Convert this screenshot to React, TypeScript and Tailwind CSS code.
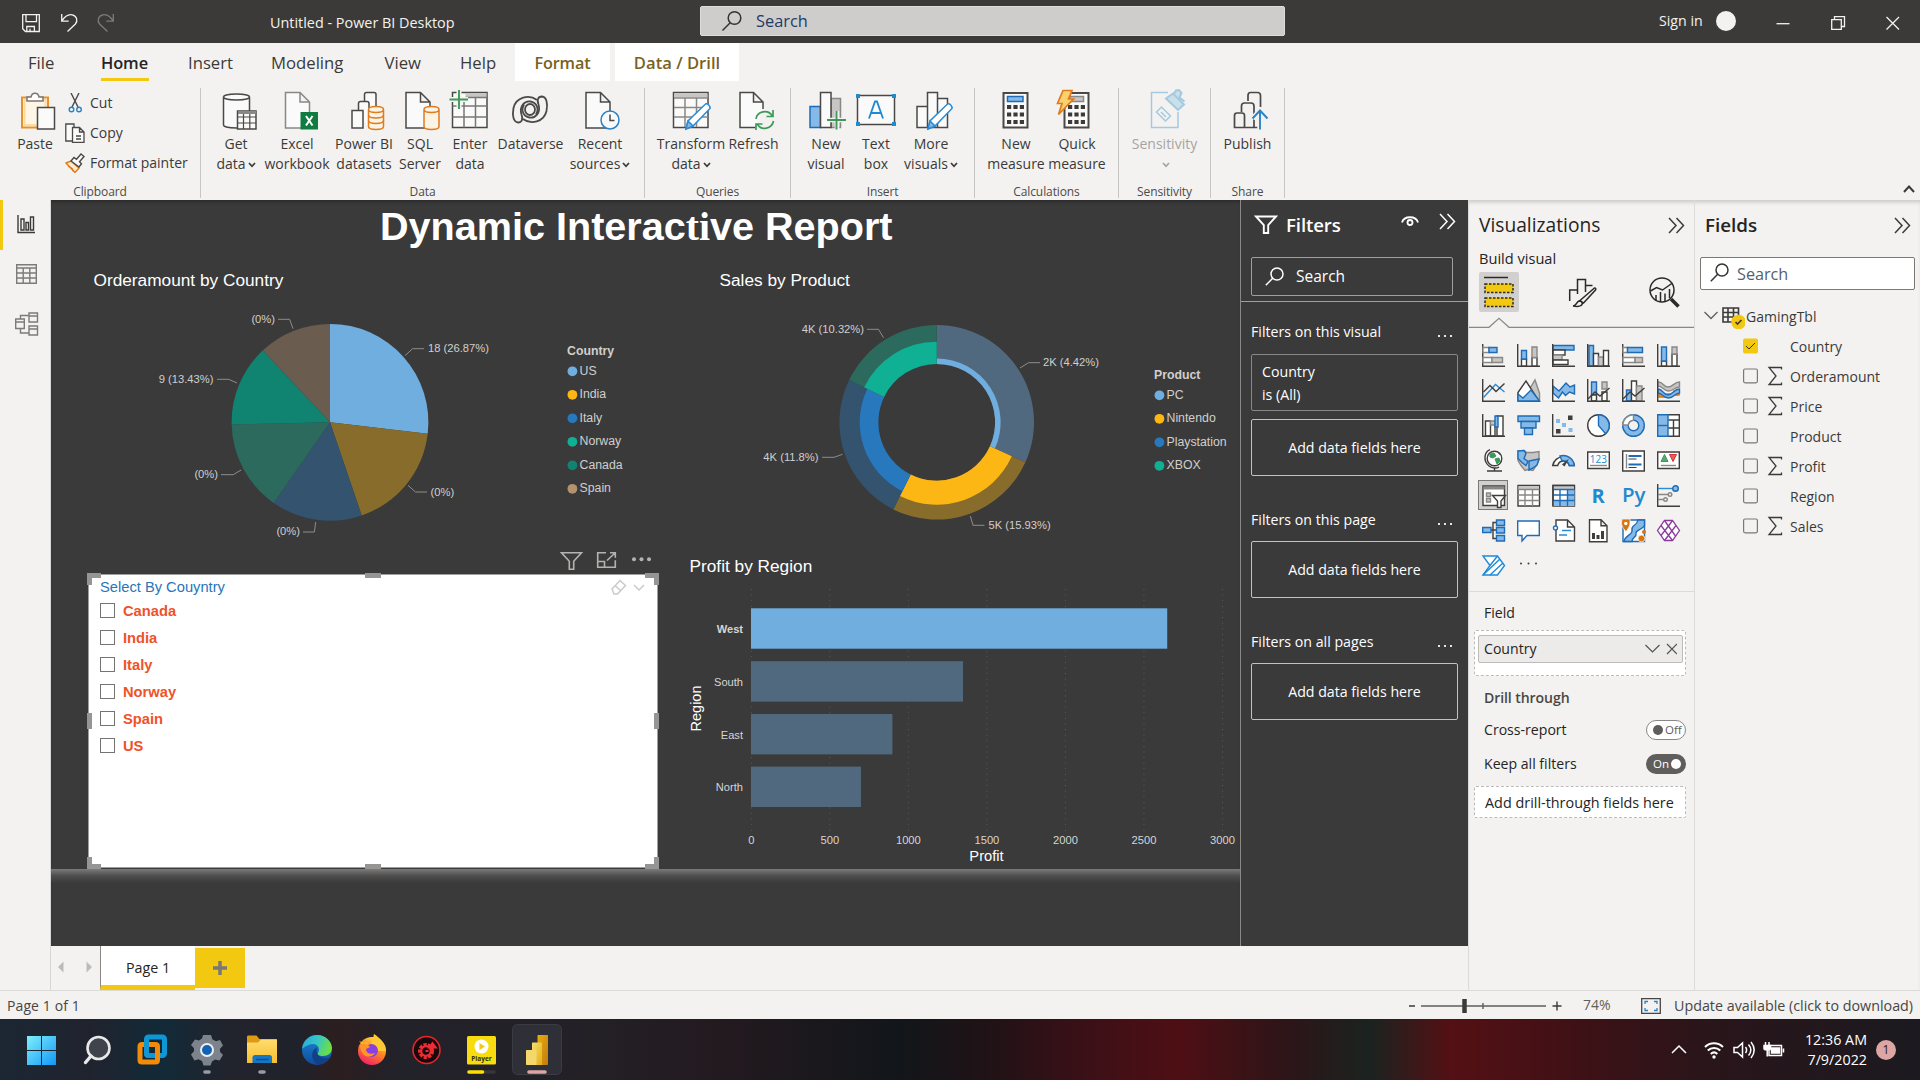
import React from "react";

type Kids = { children?: React.ReactNode };

/* ---------- geometry helpers ---------- */
const pt = (cx: number, cy: number, r: number, deg: number) => {
  const a = ((deg - 90) * Math.PI) / 180;
  return `${(cx + r * Math.cos(a)).toFixed(2)},${(cy + r * Math.sin(a)).toFixed(2)}`;
};
const ring = (cx: number, cy: number, r0: number, r1: number, a: number, b: number) => {
  const big = b - a > 180 ? 1 : 0;
  return `M${pt(cx, cy, r1, a)}A${r1},${r1} 0 ${big} 1 ${pt(cx, cy, r1, b)}L${pt(cx, cy, r0, b)}${
    r0 > 0 ? `A${r0},${r0} 0 ${big} 0 ${pt(cx, cy, r0, a)}` : ""
  }Z`;
};

/* ---------- title bar ---------- */
function TitleBar() {
  return (
    <header className="flex h-[43px] shrink-0 items-center bg-[#3b3a38] text-[#f3f2f0]">
      <svg className="h-[43px] w-[270px] shrink-0" viewBox="0 0 270 43" fill="none" stroke="#f3f2f0" strokeWidth="1.3">
        <path d="M22.7 14.7h16.6v16.8H25.4l-2.7-2.7zM26 14.7v7h10.5v-7M26.8 31.5v-5h7.6v5M30 28.8v2.6" />
        <path d="M61.7 14v7.2h7M61.9 21c3-5 7-6.8 10.3-6.2 4.8 1 5.8 6.2 3.2 9.2L67.5 31.5" />
        <path d="M113.3 14v7.2h-7M113.1 21c-3-5-7-6.8-10.3-6.2-4.8 1-5.8 6.2-3.2 9.2l7.9 7.500" stroke="#7d7c7a" />
      </svg>
      <span className="w-[430px] pt-[2px] text-[14.4px]">Untitled - Power BI Desktop</span>
      <div className="flex h-[30px] w-[585px] -translate-y-px items-center rounded-[2px] border border-[#dddcda] bg-[#cecdcb] text-[16.4px] text-[#1f3b68]">
        <svg className="ml-[20px] mr-[13px] h-[22px] w-[22px]" viewBox="0 0 22 22" fill="none" stroke="#33332f" strokeWidth="1.5">
          <circle cx="13.500" cy="8" r="6.300" />
          <path d="M9.2 12.7L1.5 20.5" />
        </svg>
        <span className="pt-[2px]">Search</span>
      </div>
      <span className="ml-[374px] w-[57px] -translate-y-px whitespace-nowrap text-[14.2px]">Sign in</span>
      <span className="h-[20px] w-[20px] -translate-y-px rounded-full bg-[#f3f2f0]" />
      <svg className="ml-[34px] h-[43px] w-[140px]" viewBox="1770 0 140 43" fill="none" stroke="#f3f2f0" strokeWidth="1.3">
        <path d="M1776.500 23.700h13" />
        <path d="M1831.700 19.700h9.600v9.600h-9.600zM1834.500 19.500v-2.800h10v9.800h-3" />
        <path d="M1886.500 17l12.500 12.500M1899 17l-12.500 12.500" />
      </svg>
    </header>
  );
}

/* ---------- ribbon tabs ---------- */
function Tabs() {
  return (
    <nav className="flex h-[38px] shrink-0 items-start text-[16.7px] leading-[40px] text-[#3b3a38]">
      <span className="ml-[28px] w-[73px]">File</span>
      <span className="relative mr-[39px] h-[38px] w-[48px] whitespace-nowrap text-[16.4px] font-semibold tracking-[-0.1px] text-[#252423]">
        Home
        <i className="absolute bottom-0 left-0 h-[3px] w-[48px] bg-[#f2c811]" />
      </span>
      <span className="w-[83px]">Insert</span>
      <span className="w-[113.5px]">Modeling</span>
      <span className="w-[75.5px]">View</span>
      <span className="w-[55px]">Help</span>
      <span className="mr-[5px] h-[38px] w-[95px] bg-white text-center text-[16.2px] font-semibold tracking-[-0.1px] text-[#7a611d]">Format</span>
      <span className="h-[38px] w-[124px] bg-white text-center text-[16.6px] font-semibold text-[#7a611d]">Data / Drill</span>
    </nav>
  );
}

/* ---------- ribbon ---------- */
function Group({ label, w, pad, children }: Kids & { label: string; w: string; pad?: string }) {
  return (
    <section className={`flex h-[110px] flex-col border-r border-[#c8c6c4] ${w}`}>
      <div className={`flex h-[95px] shrink-0 ${pad ?? "justify-center"}`}>{children}</div>
      <div className="shrink-0 text-center text-[12px] leading-[18px] tracking-[-0.1px] text-[#4c4a48]">{label}</div>
    </section>
  );
}

function Item({ w, c, a, b, caret, dim, children }: Kids & { w: string; c: number; a: string; b?: string; caret?: boolean; dim?: boolean }) {
  return (
    <div className={`flex shrink-0 flex-col items-center text-[14px] leading-[20px] whitespace-nowrap ${w} ${dim ? "text-[#a6a4a2]" : "text-[#3b3a38]"}`}>
      <svg className="mt-px mb-[5px] h-[40px] w-[44px] overflow-visible" viewBox={`${c - 22} 89 44 40`} fill="none" stroke="#4a4947" strokeWidth="1.500">
        {children}
      </svg>
      <span>{a}</span>
      <span className="flex h-[20px] items-center">
        {b}
        {caret && (
          <svg className="ml-[2px] mt-[2px] h-[6px] w-[8px]" viewBox="0 0 8 6" fill="none" stroke="currentColor" strokeWidth="1.700">
            <path d="M1 1l3 3.300L7 1" />
          </svg>
        )}
      </span>
    </div>
  );
}

const page = (x: number) => `M${x} 92.500h14.500l9.500 9.500v26h-24zM${x + 14.5} 92.500v9.500h9.500`;
const cyl = (x: number, y: number, w: number, h: number) =>
  `M${x} ${y}v${h}c0 4 ${w} 4 ${w} 0v-${h}c0-4-${w}-4-${w} 0c0 4 ${w} 4 ${w} 0`;

function Ribbon() {
  return (
    <div className="flex h-[119px] shrink-0 pt-[7px]">
      <Group label="Clipboard" w="w-[201px]" pad="justify-start">
        <Item w="ml-[5px] w-[60px]" c={35} a="Paste">
          <path d="M22 97.500h26v30H22z" fill="#fdf6e6" stroke="#e8912d" strokeWidth="2" />
          <path d="M24.500 100h21v25h-21z" stroke="#fbdc9b" strokeWidth="2" />
          <path d="M27 101v-4h4c1-5 7-5 8 0h4v4z" fill="#fff" stroke="#7a7876" />
          <path d="M37.500 107.500h17v21.500h-17z" fill="#fafafa" />
        </Item>
        <div className="flex flex-col text-[14px] leading-[30px] text-[#3b3a38]">
          <div className="flex items-center">
            <svg className="mr-[5px] h-[20px] w-[20px]" viewBox="0 0 20 20" fill="none" stroke="#4a4947" strokeWidth="1.400">
              <path d="M6 0l7 14M14 0L7 14" />
              <circle cx="6.500" cy="16.500" r="2.300" stroke="#2a83c4" />
              <circle cx="14" cy="16.500" r="2.300" stroke="#2a83c4" />
            </svg>
            Cut
          </div>
          <div className="flex items-center">
            <svg className="mr-[5px] h-[20px] w-[20px]" viewBox="0 0 20 20" fill="#fafafa" stroke="#4a4947" strokeWidth="1.300">
              <path d="M7 18H.8V1H9v3" />
              <path d="M7.500 4.500h7l4.500 4.500v10.300H7.500zM14.500 4.500V9H19M11 13h5M11 16h5" />
            </svg>
            Copy
          </div>
          <div className="flex items-center whitespace-nowrap">
            <svg className="mr-[5px] h-[20px] w-[20px]" viewBox="0 0 20 20" fill="none" stroke="#4a4947" strokeWidth="1.400">
              <path d="M1 10l5-2 8 7-4 4.500z" fill="#fde9cc" stroke="#e07b1c" />
              <path d="M3 13l4 2.500 1.500 3" stroke="#e07b1c" />
              <path d="M6 8l3-3.500 2.500 1.800L16 1l3 2.500-4.500 5.300 2 2L14 14z" fill="#fafafa" />
            </svg>
            Format painter
          </div>
        </div>
      </Group>

      <Group label="Data" w="w-[444px]" pad="justify-start pl-[5px]">
        <Item w="w-[60px]" c={235.5} a="Get" b="data" caret>
          <path d={cyl(223, 97, 26, 28)} fill="#fafafa" />
          <path d="M237 111h18.500v18H237z" fill="#fafafa" />
          <path d="M237.500 112.500h18" stroke="#8a8886" strokeWidth="3" />
          <path d="M237 117h18.500M237 123h18.500M243 114v15M249.300 114v15" strokeWidth="1.200" />
        </Item>
        <Item w="w-[62px]" c={296} a="Excel" b="workbook">
          <path d={page(284.5)} fill="#fafafa" stroke="#8a8886" />
          <path d="M299.500 112h17.500v17.500h-17.500z" fill="#107c41" stroke="none" />
          <path d="M305 116l6.500 9.500M311.500 116l-6.500 9.500" stroke="#fff" strokeWidth="2" />
        </Item>
        <Item w="w-[72px]" c={363} a="Power BI" b="datasets">
          <path d="M363.500 101v-6.500c0-1.500.5-2 2-2h7.500c1.500 0 2 .5 2 2V112" fill="#fafafa" />
          <path d="M357.500 112v-8.500c0-1.500.5-2 2-2h6.500c1.500 0 2 .5 2 2V128" fill="#fafafa" />
          <path d="M351 110.500h11V128h-11z" fill="#fafafa" />
          <path d={cyl(367.5, 109.5, 15, 17)} fill="#fdf3e5" stroke="#e07b1c" />
          <path d="M367.500 115c0 4 15 4 15 0M367.500 120.500c0 4 15 4 15 0" stroke="#e07b1c" />
        </Item>
        <Item w="w-[40px]" c={419.5} a="SQL" b="Server">
          <path d={page(405.5)} fill="#fafafa" />
          <path d={cyl(423.5, 109.5, 15, 17)} fill="#fdf3e5" stroke="#e07b1c" />
        </Item>
        <Item w="w-[60px]" c={469.5} a="Enter" b="data">
          <path d="M452 92.500h34.500v35H452z" fill="#fafafa" />
          <path d="M465 95h21" stroke="#c8c6c4" strokeWidth="4" />
          <path d="M452 106h34.500M452 117h34.500M463.500 97v30.500M475 97v30.500M465 97.500h21.500" stroke="#7a7876" />
          <path d="M449 99.500h18.500M458.500 90v19" stroke="#f3f2f0" strokeWidth="5" />
          <path d="M449 99.500h18.500M458.500 90v19" stroke="#3b9a58" strokeWidth="1.900" />
        </Item>
        <Item w="w-[61px]" c={530} a="Dataverse">
          <g strokeWidth="1.800">
            <path d="M536 100c-8-6-21-3-23.500 8-1.500 8 0 14 4.500 14.500 4.500 0 5-4 3.500-8-2.500-8 3-14 9-13 6 1 9 7 5.500 13" />
            <path d="M522 119c8 6 21 3 23.500-8 1.500-8 0-14-4.500-14.500-4.500 0-5 4-3.500 8 2.500 8-3 14-9 13-6-1-9-7-5.500-13" />
            <ellipse cx="529" cy="109.500" rx="5" ry="5.500" />
          </g>
        </Item>
        <Item w="w-[78px]" c={599.5} a="Recent" b="sources" caret>
          <path d={page(585.5)} fill="#fafafa" />
          <circle cx="609.500" cy="120" r="9" fill="#fafafa" stroke="#2a83c4" />
          <path d="M609.500 114.500v6h4.500" />
        </Item>
      </Group>

      <Group label="Queries" w="w-[146px]" pad="justify-start pl-[8px]">
        <Item w="w-[76px]" c={691} a="Transform" b="data" caret>
          <path d="M673.500 92.500h34.500v35h-34.500z" fill="#fafafa" />
          <path d="M674 95.500h33.500" stroke="#c8c6c4" strokeWidth="4" />
          <path d="M674 98h34M674 107.500h34M674 117h34M685 98v29M696.500 98v29" stroke="#8a8886" />
          <path d="M686 129l2-8 17.500-17c2-1 5 2 4.500 4.500L693 126z" fill="#fff" stroke="#2a8ad4" />
          <path d="M686 129l2-8 5 5z" fill="#84b9e8" stroke="#2a8ad4" />
        </Item>
        <Item w="w-[49px]" c={753.5} a="Refresh">
          <path d="M755 127.500h-15.500v-35h13.500l9.500 9.500v7M753 92.500v9.500h9.500" fill="#fafafa" />
          <path d="M755.500 119c1-8 12-10 16-3.500M772.500 110v6.500h-6.500M773 121c-1.500 8-12 10-16 3.500M755.500 130v-6h6.500" stroke="#3b9a58" strokeWidth="1.700" />
        </Item>
      </Group>

      <Group label="Insert" w="w-[184px]" pad="justify-start pl-[10px]">
        <Item w="w-[50px]" c={826} a="New" b="visual">
          <path d="M810 106.500h10.500v21H810z" fill="#84b9e8" stroke="#1e6cb5" />
          <path d="M831 98.500h9.500v29H831z" fill="#c8c6c4" stroke="#8a8886" />
          <path d="M820.500 92.500H831v35h-10.500z" fill="#fafafa" />
          <path d="M828 120h18M837 111v18" stroke="#f3f2f0" strokeWidth="4.500" />
          <path d="M827 120h19M836.500 111v18.500" stroke="#3b9a58" strokeWidth="1.900" />
        </Item>
        <Item w="w-[50px]" c={876} a="Text" b="box">
          <path d="M857.500 95.500h37v29h-37z" fill="#fafafa" />
          <path d="M856 94h4v4h-4zM892 94h4v4h-4zM856 122h4v4h-4zM892 122h4v4h-4z" fill="#1e8ad0" stroke="none" />
          <path d="M869 118.500l6-17h2l6 17M871 113h10" stroke="#1e8ad0" strokeWidth="1.800" />
        </Item>
        <Item w="w-[60px]" c={931} a="More" b="visuals" caret>
          <path d="M917 106.500h10.500v21H917zM937.500 98.500h10v29h-10zM927.500 92.500h10v35h-10z" fill="#fafafa" />
          <path d="M928 129l2-8 17.500-17c2-1 5 2 4.500 4.500L935 126z" fill="#fff" stroke="#2a8ad4" />
          <path d="M928 129l2-8 5 5z" fill="#84b9e8" stroke="#2a8ad4" />
        </Item>
      </Group>

      <Group label="Calculations" w="w-[144px]" pad="justify-start pl-[10px]">
        <Item w="w-[62px]" c={1016} a="New" b="measure">
          <path d="M1003.500 93h24v34.500h-24z" fill="#fafafa" strokeWidth="2" />
          <path d="M1007.500 96.500h15.500v5h-15.500z" fill="#84b9e8" stroke="#1e6cb5" />
          <path d="M1007 107h17M1007 114.500h17M1007 122h17" stroke="#3b3a38" strokeWidth="3.800" strokeDasharray="4.200 2.200" />
        </Item>
        <Item w="w-[60px]" c={1077} a="Quick" b="measure">
          <path d="M1064.500 93h24v34.500h-24z" fill="#fafafa" strokeWidth="2" />
          <path d="M1070 96.500h13.500v5H1070z" fill="#c8c6c4" stroke="#8a8886" />
          <path d="M1068 107h17M1068 114.500h17M1068 122h17" stroke="#3b3a38" strokeWidth="3.800" strokeDasharray="4.200 2.200" />
          <path d="M1063 90.500h9l-3.500 8.500h5l-15 15.500 3.500-11h-4.500z" fill="#fbd06e" stroke="#e07b1c" strokeWidth="1.700" />
        </Item>
      </Group>

      <Group label="Sensitivity" w="w-[92px]">
        <Item w="w-[91px]" c={1164} a="Sensitivity" b="" caret dim>
          <g stroke="#a3cae0">
            <path d="M1177 112v15.500h-26.500v-35H1167" />
            <path d="M1155.500 112l5-5 9 9-5 5zM1160 112l5 5" />
            <path d="M1165 98.500l7-5 11 11-6 5.500zM1172 95l3-4.500 3-.5 2.500 3-2 4.500 5 4" fill="#c9dfea" strokeWidth="2" />
          </g>
        </Item>
      </Group>

      <Group label="Share" w="w-[74px]">
        <Item w="w-[74px]" c={1247} a="Publish">
          <g strokeWidth="1.700">
            <path d="M1247 101v-5.500c0-2 .5-3 2.500-3h7c2 0 3 1 3 3V107" />
            <path d="M1240.500 112v-6c0-2 1-3 3-3h6.500c2 0 3 1 3 3v21.500" />
            <path d="M1233.500 127.500v-12c0-2 .5-2.500 2.500-2.500h5c2 0 2.500.5 2.500 2.500v12zM1243.500 127.500h13" />
          </g>
          <path d="M1259 129v-18M1251.500 118.500l7.500-8 7.500 8" stroke="#f3f2f0" strokeWidth="5" />
          <path d="M1259 129.500v-18.500M1251.500 118.500l7.500-8 7.500 8" stroke="#2a83c4" strokeWidth="1.900" />
        </Item>
      </Group>
      <svg className="mt-[94px] ml-auto mr-[4px] h-[12px] w-[14px]" viewBox="0 0 14 12" fill="none" stroke="#3b3a38" strokeWidth="2">
        <path d="M2 10l5-5.500 5 5.500" />
      </svg>
    </div>
  );
}

/* ---------- left rail ---------- */
function Rail() {
  return (
    <aside className="flex w-[51px] shrink-0 flex-col border-r border-[#d8d6d4]">
      <div className="flex h-[50px] items-center border-l-[3px] border-[#f2c811] pl-[13px]">
        <svg className="h-[20px] w-[20px]" viewBox="0 0 20 20" fill="none" stroke="#3b3a38" strokeWidth="1.400">
          <path d="M2 0v17.500h17M5 4h3v11H5zM10 7.500h2.500V15H10zM14.500 2h3v13h-3z" />
        </svg>
      </div>
      <div className="flex h-[47px] items-center pl-[16px]">
        <svg className="h-[20px] w-[21px]" viewBox="0 0 21 20" fill="none" stroke="#7d7b79" strokeWidth="1.400">
          <path d="M.7.700h19.600v18.600H.7zM.7 4h19.600M.7 9h19.600M.7 14h19.600M7.200 4v15M13.800 4v15" />
        </svg>
      </div>
      <div className="flex h-[54px] items-center pl-[15px]">
        <svg className="h-[24px] w-[24px]" viewBox="0 0 24 24" fill="none" stroke="#7d7b79" strokeWidth="1.400">
          <path d="M.7 7h8.600v9.500H.7zM.7 10h8.600M14 1h8.500v9H14zM14 4h8.500M14 14h8.500v9H14zM14 17h8.500M5.500 7V3.500H14M5.500 16.500v4.500H14" />
        </svg>
      </div>
    </aside>
  );
}

/* ---------- report visuals ---------- */
const C = { us: "#70aee0", india: "#fdb714", italy: "#2878bd", norway: "#0fb094", canada: "#118371", spain: "#b3926e" };

const pieData: [number, string][] = [
  [18, C.us],
  [12, "#886c2b"],
  [10, "#33536f"],
  [10, "#2b6a5d"],
  [9, "#118371"],
  [8, "#6a5c4e"],
];

function Legend({ x, y, title, rows }: { x: number; y: number; title: string; rows: [string, string][] }) {
  return (
    <g fill="#d0cfcd" fontSize="12.300">
      <text x={x} y={y + 4.5} fontWeight="700">{title}</text>
      {rows.map(([n, c], i) => (
        <g key={n}>
          <circle cx={x + 5.4} cy={y + 20.7 + i * 23.5} r="4.900" fill={c} />
          <text x={x + 12.5} y={y + 24.3 + i * 23.4}>{n}</text>
        </g>
      ))}
    </g>
  );
}

const leader = { fill: "none", stroke: "#8f8d8b", strokeWidth: 1 } as const;

function PieChart() {
  let acc = 0;
  return (
    <svg className="h-[300px] w-[623px]" viewBox="51 260 623 300" fontFamily="Liberation Sans, Arial, sans-serif">
      <text x="93.500" y="285.500" fontSize="17.250" fill="#fff">Orderamount by Country</text>
      {pieData.map(([v, c], i) => {
        const a = (acc / 67) * 360;
        acc += v;
        return <path key={i} d={ring(330, 422.3, 0, 98.4, a, (acc / 67) * 360)} fill={c} />;
      })}
      <g {...leader}>
        <path d="M405 355.700l7.500-7h11.500M278 319.300h11.600l3.400 9.400M217 379.300h11.600l8.400 3.700M221 474.700h12.200l8-4.700M303 532h11.400l1.300-10M408 485.300l7.400 6.700H427" />
      </g>
      <g fontSize="11.200" fill="#d0cfcd">
        <text x="428" y="352.300">18 (26.87%)</text>
        <text x="275" y="323.300" textAnchor="end">(0%)</text>
        <text x="213.500" y="383.300" textAnchor="end">9 (13.43%)</text>
        <text x="218" y="478.300" textAnchor="end">(0%)</text>
        <text x="300" y="535.300" textAnchor="end">(0%)</text>
        <text x="430.500" y="495.500">(0%)</text>
      </g>
      <Legend x={567} y={350.6} title="Country" rows={[["US", C.us], ["India", C.india], ["Italy", C.italy], ["Norway", C.norway], ["Canada", C.canada], ["Spain", C.spain]]} />
    </svg>
  );
}

const donut: [number, number, number, string, string][] = [
  [0, 114.3, 63.9, "#51697f", C.us],
  [114.3, 206.5, 82.4, "#886c2b", C.india],
  [206.5, 295.8, 77, "#33536f", C.italy],
  [295.8, 360, 80.6, "#2b6a5d", C.norway],
];

function DonutChart() {
  return (
    <svg className="h-[300px] w-[566px]" viewBox="674 260 566 300" fontFamily="Liberation Sans, Arial, sans-serif">
      <text x="719.500" y="285.500" fontSize="17.250" fill="#fff">Sales by Product</text>
      {donut.map(([a, b, r, dim, full]) => (
        <g key={a}>
          <path d={ring(936.7, 422.3, 58.4, 97.3, a, b)} fill={dim} />
          <path d={ring(936.7, 422.3, 58.4, r, a, b)} fill={full} />
        </g>
      ))}
      <g {...leader}>
        <path d="M867 329.300h11.500l5 8.400M1020 368l8.500-5.300H1040M822 457.300h12l8.500-3M970.300 516l2.700 9.300h11.500" />
      </g>
      <g fontSize="11.200" fill="#d0cfcd">
        <text x="864" y="333" textAnchor="end">4K (10.32%)</text>
        <text x="1043" y="366.300">2K (4.42%)</text>
        <text x="818.500" y="461.300" textAnchor="end">4K (11.8%)</text>
        <text x="988.500" y="529.300">5K (15.93%)</text>
      </g>
      <Legend x={1154} y={374.6} title="Product" rows={[["PC", C.us], ["Nintendo", C.india], ["Playstation", C.italy], ["XBOX", C.norway]]} />
    </svg>
  );
}

const regions: [string, number, number, number][] = [
  ["West", 2650, 608.3, 632.5],
  ["South", 1350, 661.2, 686],
  ["East", 900, 714, 739],
  ["North", 700, 766.6, 791],
];

function BarChart() {
  const x0 = 751.3;
  const k = 471.2 / 3000;
  return (
    <svg className="h-[309px] w-[566px] overflow-visible" viewBox="674 560 566 309" fontFamily="Liberation Sans, Arial, sans-serif">
      <text x="689.500" y="571.500" fontSize="17.250" fill="#fff">Profit by Region</text>
      {[0, 500, 1000, 1500, 2000, 2500, 3000].map((v) => (
        <g key={v}>
          <path d={`M${x0 + v * k} 589V831`} stroke="#5c5b5a" strokeDasharray="1 4.600" />
          <text x={x0 + v * k} y="844" fontSize="11.200" textAnchor="middle" fill="#d6d5d3">{v}</text>
        </g>
      ))}
      {regions.map(([n, v, y, ty], i) => (
        <g key={n}>
          <rect x={x0 - 0.3} y={y} width={v * k} height="40.400" fill={i ? "#51697f" : C.us} />
          <text x="743" y={ty} fontSize="11.100" textAnchor="end" fill="#d6d5d3" fontWeight={i ? 400 : 700}>{n}</text>
        </g>
      ))}
      <text x="986.500" y="860.500" fontSize="14.700" textAnchor="middle" fill="#fff">Profit</text>
      <text transform="translate(700.500 708.500) rotate(-90)" fontSize="14.500" textAnchor="middle" fill="#fff">Region</text>
    </svg>
  );
}

function Slicer() {
  return (
    <div className="flex h-[309px] w-[623px] flex-col">
      <svg className="h-[14px] w-[623px] overflow-visible" viewBox="51 560 623 14" fill="none" stroke="#b5b3b1" strokeWidth="1.600">
        <path d="M561.500 552.700h20l-7.800 8.600v8h-4.400v-8z" />
        <path d="M606 552.700h-8.300v14.600h17.600v-7M598 561.500h6.500v5.500M610 552.700h5.300v5M615 553l-8 7.500" />
        <g fill="#b5b3b1" stroke="none">
          <circle cx="634" cy="559.300" r="2" />
          <circle cx="641.500" cy="559.300" r="2" />
          <circle cx="649" cy="559.300" r="2" />
        </g>
      </svg>
      <div className="relative ml-[37px] h-[294px] w-[570px] border border-[#a19f9d] bg-white pl-[11px] font-['Liberation_Sans',Arial,sans-serif]">
        <svg className="absolute -top-[2px] -left-[2px] h-[296px] w-[572px]" viewBox="0 0 572 296" fill="none" stroke="#979593" strokeWidth="5">
          <path d="M2.500 12V2.500H14M558 2.500h11.500V12M2.500 284v9.500H14M558 293.500h11.500V284M278 2.500h16M278 293.500h16M2.500 140v16M569.500 140v16" />
          <g stroke="#cccac8" strokeWidth="1.500">
            <path d="M525 16l8-8.500 5.500 5-8 8.500h-3.500zM528.500 13l5.500 5" />
            <path d="M547 12l5 5 5-5" />
          </g>
        </svg>
        <div className="mt-[3px] h-[20px] text-[14.7px] leading-[18px] text-[#2a75b8]">Select By Couyntry</div>
        {["Canada", "India", "Italy", "Norway", "Spain", "US"].map((n) => (
          <div key={n} className="flex h-[27px] items-center text-[14.7px] font-bold text-[#ef5228]">
            <i className="mr-[8px] -mt-[2px] h-[15px] w-[15px] border border-[#767472]" />
            {n}
          </div>
        ))}
      </div>
    </div>
  );
}

function Report() {
  return (
    <main className="flex h-[746px] w-[1189px] flex-col bg-[#3a3a3a] shadow-[inset_0_3px_3px_-1px_#2c2c2c]">
      <h1 className="h-[60px] shrink-0 pl-[329px] pt-[3px] font-['Liberation_Sans',Arial,sans-serif] text-[39.6px] leading-[46px] font-bold whitespace-nowrap text-white">
        Dynamic Interac<span className="font-['Liberation_Serif',serif]">ti</span>ve Report
      </h1>
      <div className="grid grid-cols-[623px_566px] grid-rows-[300px_309px]">
        <PieChart />
        <DonutChart />
        <Slicer />
        <BarChart />
      </div>
      <div className="h-[14px] bg-linear-to-b from-[#7b7b7b] via-[#4d4d4d] to-[#3a3a3a]" />
    </main>
  );
}

/* ---------- filters ---------- */
function Double({ color, cls }: { color: string; cls: string }) {
  return (
    <svg className={`h-[17px] w-[17px] ${cls}`} viewBox="0 0 17 17" fill="none" stroke={color} strokeWidth="1.500">
      <path d="M1 1l7 7.500L1 16M8.500 1l7 7.500-7 7.500" />
    </svg>
  );
}

function Mag({ color, cls }: { color: string; cls: string }) {
  return (
    <svg className={`h-[19px] w-[19px] ${cls}`} viewBox="0 0 19 19" fill="none" stroke={color} strokeWidth="1.500">
      <circle cx="12" cy="7" r="6" />
      <path d="M7.700 11.300L.8 18.200" />
    </svg>
  );
}

function FilterHead({ text, cls }: { text: string; cls: string }) {
  return (
    <div className={`flex h-[20px] items-center justify-between pr-[16px] text-[14.2px] ${cls}`}>
      <span>{text}</span>
      <span className="mt-[7px] flex gap-[4px]">
        <i className="h-[2px] w-[2px] bg-[#e6e5e3]" />
        <i className="h-[2px] w-[2px] bg-[#e6e5e3]" />
        <i className="h-[2px] w-[2px] bg-[#e6e5e3]" />
      </span>
    </div>
  );
}

const AddBox = ({ cls }: { cls: string }) => (
  <div className={`flex h-[57px] w-[207px] items-center justify-center rounded-[2px] border border-[#c4c2c0] text-[14.2px] ${cls}`}>Add data fields here</div>
);

function Filters() {
  return (
    <section className="flex h-[746px] w-[228px] flex-col border-l border-[#8a8886] bg-[#3a3a3a] text-white">
      <div className="flex h-[102px] flex-col border-b border-[#a19f9d] pl-[10px]">
        <div className="flex h-[50px] items-center">
          <svg className="ml-[3px] h-[20px] w-[24px]" viewBox="0 0 24 20" fill="none" stroke="#fff" strokeWidth="1.900">
            <path d="M2 1.500h20l-7.800 8.500v8h-4.400v-8z" />
          </svg>
          <span className="ml-[8px] w-[115px] text-[18.6px] font-semibold tracking-[-0.1px]">Filters</span>
          <svg className="-mt-[8px] h-[12px] w-[18px]" viewBox="0 0 18 12" fill="none" stroke="#fff" strokeWidth="1.800">
            <path d="M1 7.500C3 .5 15 .5 17 7.500" />
            <circle cx="9" cy="7.500" r="2.500" />
          </svg>
          <Double color="#fff" cls="-mt-[7px] ml-[20px]" />
        </div>
        <div className="mt-[7px] flex h-[39px] w-[202px] items-center rounded-[2px] border border-[#a19f9d] text-[15.5px]">
          <Mag color="#fff" cls="ml-[13px] mr-[12px]" />
          Search
        </div>
      </div>
      <div className="flex flex-col pl-[10px]">
        <FilterHead text="Filters on this visual" cls="mt-[20px]" />
        <div className="mt-[12px] flex h-[57px] w-[207px] flex-col justify-center rounded-[2px] border border-[#8a8886] pl-[10px] text-[14.2px] leading-[23px]">
          <span>Country</span>
          <span>is (All)</span>
        </div>
        <AddBox cls="mt-[8px]" />
        <FilterHead text="Filters on this page" cls="mt-[34px]" />
        <AddBox cls="mt-[11px]" />
        <FilterHead text="Filters on all pages" cls="mt-[34px]" />
        <AddBox cls="mt-[11px]" />
      </div>
    </section>
  );
}

/* ---------- visualization gallery ---------- */
const B = "#1e6cb5";
const L = "#84b9e8";
const D = "#3f3e3c";
const G = "#8a8886";
const S = "#c8c6c4";
const axes = <path d="M.700 0v22.300H23" stroke={D} />;

const gallery: React.ReactNode[] = [
  <>{axes}<path d="M1 3.500h6v5H1z" fill="#fff" stroke={G} /><path d="M7 3.500h8v5H7z" fill={L} stroke={B} /><path d="M1 13.500h9v5H1z" fill="#fff" stroke={G} /><path d="M10 13.500h10.500v5H10z" fill={S} stroke={G} /></>,
  <>{axes}<path d="M4.500 15h5v7h-5z" fill="#fff" stroke={D} /><path d="M4.500 6.500h5V15h-5z" fill={L} stroke={B} /><path d="M15 13.500h5V22h-5z" fill="#fff" stroke={D} /><path d="M15 3h5v10.500h-5z" fill={S} stroke={G} /></>,
  <><path d="M1 1.500h21v4.500H1z" fill={L} stroke={B} /><path d="M1 6h12v5H1z" fill="#fff" stroke={D} /><path d="M1 11h9v5H1z" fill={S} stroke={G} /><path d="M1 16h15v4.500H1z" fill="#fff" stroke={D} />{axes}</>,
  <><path d="M2 1.500h4.500V22H2z" fill={L} stroke={B} /><path d="M6.500 9.500h5V22h-5z" fill="#fff" stroke={D} /><path d="M11.500 13h5v9h-5z" fill={S} stroke={G} /><path d="M16.500 6.500h5V22h-5z" fill="#fff" stroke={D} />{axes}</>,
  <>{axes}<path d="M1 3.500h4.500v5H1z" fill="#fff" stroke={G} /><path d="M5.500 3.500h15v5h-15z" fill={L} stroke={B} /><path d="M1 13.500h12v5H1z" fill="#fff" stroke={G} /><path d="M13 13.500h7.500v5H13z" fill={S} stroke={G} /></>,
  <>{axes}<path d="M4.500 17h5v5h-5z" fill="#fff" stroke={D} /><path d="M4.500 3h5v14h-5z" fill={L} stroke={B} /><path d="M15 10h5v12h-5z" fill="#fff" stroke={D} /><path d="M15 3h5v7h-5z" fill={S} stroke={G} /></>,

  <>{axes}<path d="M1.500 18.500l12-13 9 7.500" stroke="#2a8ad4" /><path d="M1.500 13L8 6.500l6 6 8.500-8" stroke={D} /></>,
  <><path d="M9 16L18 1l4.500 13v8H9z" fill={S} stroke={G} /><path d="M1 13.500L9 2l13 20H1z" fill="#fff" stroke={D} /><path d="M1 15l5 4 8-8 8.500 11H1z" fill={L} stroke={B} /></>,
  <><path d="M1 7l6 5 7-8 4 4 4.500-2v9l-5-2-4 3.500-3-3.500-4 6-5.500-5z" fill={L} stroke={B} />{axes}</>,
  <><path d="M4.500 3h5v13h-5z" fill={L} stroke={B} /><path d="M15 3h5v7h-5z" fill={S} stroke={G} /><path d="M4.500 16h5v6h-5zM15 13h5v9h-5z" fill="#fff" stroke={D} />{axes}<path d="M1 20l7-7 5 4 9.500-8" stroke={D} /></>,
  <><path d="M4.500 11h5v11h-5z" fill={L} stroke={B} /><path d="M9.500 2h5v20h-5z" fill="#fff" stroke={D} /><path d="M14.500 7H20v15h-5.500z" fill={S} stroke={G} />{axes}<path d="M1 20l7-7 5 4 9.500-8" stroke={D} /></>,
  <><path d="M2 15h5v3H2zM17 12h5v4h-5zM8 15h6v3H8z" fill="#f0912d" stroke="#d9730d" /><path d="M1 3c6 0 5 5 10 5s6-5 11.500-5v5c-5 0-6 4-11 4S6 7 1 7z" fill={S} stroke={G} /><path d="M1 10c5 0 5 6 10 6s6-6 11.500-6v4c-5 0-5 5-11 5S6 14 1 14z" fill={L} stroke={B} />{axes}</>,

  <><path d="M3.500 7h5v15h-5zM8.500 9H13v13H8.500zM15 2h6v20h-6z" fill="#fff" stroke={D} /><path d="M8.500 7H13v4H8.500z" fill={S} stroke={G} /><path d="M13 2h3v11h-3z" fill={L} stroke={B} />{axes}</>,
  <><path d="M1 2h21.500v5.500H1z" fill={L} stroke={B} /><path d="M4 7.500h15V14H4z" fill={L} stroke={B} /><path d="M7.500 14h8v6.500h-8z" fill={L} stroke={B} /></>,
  <>{axes}<path d="M16 1.500h4.500V6H16zM4 15h4.500v4.500H4z" fill={D} stroke="none" /><path d="M4 5h4v4H4zM10 9h4v4h-4zM16.500 14h4v4h-4z" fill={L} stroke="none" /></>,
  <><circle cx="11.500" cy="11.500" r="10.800" fill="#fff" stroke={D} /><path d="M11.500.700a10.800 10.800 0 0 1 7 18.900l-7-8.100z" fill={L} stroke={B} /></>,
  <><circle cx="11.500" cy="11.500" r="8" stroke={L} strokeWidth="5.500" /><circle cx="11.500" cy="11.500" r="10.800" stroke={B} /><circle cx="11.500" cy="11.500" r="5.300" stroke={B} /><path d="M.700 11A10.800 10.800 0 0 1 11.500.700v5.500A5.300 5.300 0 0 0 6.200 11z" fill="#fff" stroke={G} /></>,
  <><path d="M.700.700h21.600v21.600H.7z" fill="#fff" stroke={D} /><path d="M.700.700H11v21.600H.7z" fill={L} stroke={B} /><path d="M1 11.500h10" stroke={B} /><path d="M11.500 6h11M16.500 6v16M11.500 14h11" stroke={D} /></>,

  <><circle cx="12.500" cy="9.500" r="7.300" fill="#fff" stroke={D} /><path d="M8 5l4-1 2 3-3 2-3-1zM13 10l4-1 1 3-3 3zM16 4l2 2" fill="#3b9a58" stroke="#3b9a58" strokeWidth="1" /><path d="M8 .700C2 3 1 12 7 17c3 2.500 8 2.500 10 1M12.500 19v3M5 22h15" stroke={D} /></>,
  <><path d="M1 2l6-.500 3 2h6l6-1v8l-2 5-4 6-5-1-3 1-4-5-3-5z" fill={S} stroke={G} /><path d="M1 2l6-.500 2 3-2 5 4 3-2 4-4-3-4-4z" fill={L} stroke={B} /><path d="M12 12l10-2-2 6-4 3-4 2z" fill={L} stroke={B} /></>,
  <><path d="M.700 16.500a11 11 0 0 1 21.600 0h-5a6 6 0 0 0-11.600 0z" fill="#fff" stroke={D} /><path d="M8 7a11 11 0 0 1 14.300 9.500h-5A6 6 0 0 0 10 12z" fill={L} stroke={B} /><path d="M10 15.500l7-6-4.500 8z" fill={D} stroke="none" /></>,
  <><path d="M.700 3h21.600v16.500H.7z" fill="#fff" stroke={D} /><text x="2.800" y="13.800" fontSize="10" fill="#2a8ad4" stroke="none">123</text><path d="M3 16.500h17" stroke={G} /></>,
  <><path d="M.700 2h21.600v20H.7z" fill="#fff" stroke={D} /><path d="M4.500 5v14.500" stroke={G} /><path d="M6.500 7h13M6.500 15.500h13" stroke={B} strokeWidth="2" /><path d="M6.500 10h8M6.500 18.500h8" stroke={D} strokeWidth="1" /></>,
  <><path d="M.700 3h21.600v16.500H.7z" fill="#fff" stroke={D} /><path d="M4 12.500l3.500-7 3.500 7z" fill="#57a773" stroke="#3b9a58" strokeWidth="1" /><path d="M12.500 5.500h7l-3.500 7z" fill="#ef5b4c" stroke="#d13438" strokeWidth="1" /><path d="M4 16.500h15" stroke={G} /></>,

  <><path d="M1 2h21.500v19.500H1z" fill="#fff" stroke={D} /><path d="M1.500 4h21" stroke={G} strokeWidth="3" /><path d="M4.500 9h4v3.500h-4zM4.500 14.500h4V18h-4z" fill={S} stroke={G} /><path d="M10.500 11.500h13L19 17v6.500h-3.500V17z" fill="#fff" stroke={D} /></>,
  <><path d="M1 1.500h21.500V22H1z" fill="#fff" stroke={D} /><path d="M1.500 3.500h20.500" stroke={S} strokeWidth="3" /><path d="M1 5.500h21.500M1 11h21.500M1 16.500h21.500M8 5.500V22M15.500 5.500V22" stroke={G} /></>,
  <><path d="M1 1.500h21.500V22H1z" fill="#fff" stroke={D} /><path d="M1.500 3.500h20.500" stroke={S} strokeWidth="3" /><path d="M15.500 5.500h7V22H1v-5.500h14.500z" fill={L} stroke="none" /><path d="M1 5.500h21.500M1 11h21.500M1 16.500h21.500M8 5.500V22M15.500 5.500V22" stroke={B} /><path d="M1 22V1.500h21.500" stroke={D} /></>,
  <text x="4.500" y="19" fontSize="20" fontWeight="700" fill="#1e8ad0" stroke="none">R</text>,
  <text x="0" y="17.500" fontSize="20.500" fontWeight="600" fill="#1e8ad0" stroke="none">Py</text>,
  <>{axes}<path d="M1 4.500h15" stroke="#2a8ad4" /><circle cx="18.500" cy="4.500" r="2.800" fill={L} stroke={B} /><path d="M1 10.500h10M1 15.500h5" stroke={G} /><circle cx="13" cy="10.500" r="1.800" stroke={G} /><circle cx="8.500" cy="15.500" r="1.800" stroke={G} /></>,

  <><path d="M8 11h6M14 3.500h-3v16h3M11 11h3" stroke={D} /><path d="M.700 8.500H9v5H.7zM14.500 1h8v5.500h-8zM14.500 8.500h8V14h-8zM14.500 16.500h8V22h-8z" fill={L} stroke={B} /></>,
  <path d="M.700 2h21.600v14.500H10L5 22v-5.500H.7z" fill="#fff" stroke={B} />,
  <><path d="M4 1h11.500l7 7v14H4z" fill="#fff" stroke={D} /><path d="M15.500 1v7H22" stroke={D} /><path d="M10 11.500h9M7 16h8" stroke="#2a8ad4" /><circle cx="3.500" cy="9" r="2" fill="#fff" stroke={B} /></>,
  <><path d="M2.500.700H14l6 6v16H2.500zM14 .700v6h6" fill="#fff" stroke={D} /><path d="M5 20v-6h3v6zM9.500 20v-4h3v4zM14 20v-8h3v8z" fill={D} stroke="none" /></>,
  <><path d="M1 1h21.500v21.500H1z" fill="#fff" stroke={B} /><path d="M10 22.500c0-5 5-4 4-8s6-3 8.500-8V1H16c-1 6-7 5-6 10s-7 5-8 11.500z" fill={L} stroke={B} /><path d="M0 0h8v4c0 4-4 8.500-4 8.500S-.5 8-.500 4z" fill="#d9730d" stroke="#f3f2f0" strokeWidth=".8" /><circle cx="3.800" cy="4.500" r="1.700" fill="#fff" stroke="none" /><circle cx="19.500" cy="19.500" r="3.400" fill="#d9730d" stroke="#f3f2f0" strokeWidth=".8" /><circle cx="22" cy="13" r="2" fill="#d9730d" stroke="none" /></>,
  <g stroke="#8b3a9c" strokeWidth="1.300"><path d="M7.500 1.500h8L22.500 11.500l-7 10h-8L.500 11.500z" fill="#fff" /><path d="M7.500 1.500l11 15.500M4 6.500l11.500 15M15.500 1.500L11.500 7M19 6.500L7.500 21.500M11.500 7L4 16.500" /></g>,

  <g stroke="#1e8ad8"><path d="M1 2h14.500l7 9.500-7 9.500H1l7-9.500z" fill="#fff" /><path d="M1 21L18 5M8 11.500L15.500 2M8 21L21 9" /></g>,
  <path d="M4 9.500h0M11.500 9.500h0M19 9.500h0" stroke={D} strokeWidth="2" strokeLinecap="round" />,
];

function Visualizations() {
  return (
    <section className="flex w-[227px] shrink-0 flex-col border-x border-[#dddbd9] text-[#252423]">
      <div className="flex h-[50px] items-center pl-[10px]">
        <span className="w-[189px] text-[19.2px] font-medium">Visualizations</span>
        <Double color="#3b3a38" cls="" />
      </div>
      <div className="h-[22px] pl-[10px] text-[14.6px] leading-[16px] font-medium">Build visual</div>
      <svg className="h-[57px] w-[225px]" viewBox="1469 272 225 57" fill="none" stroke="#2b2a28" strokeWidth="1.500">
        <rect x="1479" y="272" width="40" height="40" rx="2" fill="#d2d0ce" stroke="none" />
        <path d="M1484 277.500h24" />
        <path d="M1485 284h28v8.500h-28zM1485 298h28v8.500h-28z" fill="#f2c811" strokeDasharray="2.500 1.500" />
        <path d="M1569.700 301v-11h8M1577.500 294v-14.500h8V292M1585.500 285.500h7" />
        <path d="M1573 306c4 0 3-4 6-5 3 0 4.500 3 2 4.500-2 1.500-5 1-8 .5zM1580 300.500l14.500-12.500c1.500 0 1.500 1 1 2l-12 13z" fill="#f3f2f0" />
        <circle cx="1662" cy="290" r="12" />
        <path d="M1650.500 291l6-3.500 6 2.500 10-7M1656 301v-6M1660.500 302v-10M1665 301.500v-8M1669.500 298v-9" />
        <path d="M1671 299l7.500 7.500" strokeWidth="3.500" />
        <path d="M1469 327.300h20l10-9 10 9h185" stroke="#8a8886" strokeWidth="1.200" />
      </svg>
      <div className="grid grid-cols-[repeat(6,35px)] grid-rows-[repeat(7,35px)] pt-[11px] pl-[9px]">
        {gallery.map((g, i) => (
          <div key={i} className={`flex h-[30px] w-[30px] items-center justify-center ${i === 24 ? "border border-[#7a7876] bg-[#d2d0ce]" : ""}`}>
            <svg className="h-[23px] w-[23px] shrink-0 overflow-visible" viewBox="0 0 23 23" fill="none" strokeWidth="1.400">
              {g}
            </svg>
          </div>
        ))}
      </div>
      <div className="mt-[6px] flex flex-col border-t border-[#dddbd9] pl-[5px] text-[14.1px]">
        <div className="h-[38px] pl-[10px] leading-[41px]">Field</div>
        <div className="h-[46px] w-[212px] rounded-[2px] border border-dashed border-[#bdbbb9] bg-white px-[3px] pt-[4px]">
          <div className="flex h-[28px] w-[205px] items-center rounded-[2px] border border-[#bdbbb9] bg-[#edebe9] pl-[5px]">
            <span className="w-[161px]">Country</span>
            <svg className="h-[12px] w-[32px]" viewBox="0 0 32 12" fill="none" stroke="#55534f" strokeWidth="1.200">
              <path d="M.500 2l7 7 7-7M22 1l10 10M32 1L22 11" />
            </svg>
          </div>
        </div>
        <div className="mt-[6px] h-[32px] pl-[10px] leading-[32px] font-semibold text-[#4a4846] tracking-[-0.1px]">Drill through</div>
        <div className="flex h-[32px] w-[212px] items-center justify-between pl-[10px]">
          Cross-report
          <span className="flex h-[20px] w-[40px] items-center rounded-full border border-[#8a8886] bg-white pl-[6px] text-[11.5px] text-[#605e5c]">
            <i className="mr-[2px] h-[10px] w-[10px] rounded-full bg-[#605e5c]" />
            Off
          </span>
        </div>
        <div className="mt-px flex h-[33px] w-[212px] items-center justify-between pl-[10px]">
          Keep all filters
          <span className="flex h-[20px] w-[40px] items-center rounded-full bg-[#605e5c] pl-[7px] text-[11.5px] text-white">
            On
            <i className="ml-[2px] h-[10px] w-[10px] rounded-full bg-white" />
          </span>
        </div>
        <div className="mt-[6px] h-[32px] w-[212px] rounded-[2px] border border-dashed border-[#bdbbb9] bg-white pl-[10px] text-[14.4px] leading-[32px] whitespace-nowrap">Add drill-through fields here</div>
      </div>
    </section>
  );
}

/* ---------- fields ---------- */
const fields: [string, boolean][] = [
  ["Country", false],
  ["Orderamount", true],
  ["Price", true],
  ["Product", false],
  ["Profit", true],
  ["Region", false],
  ["Sales", true],
];

function Fields() {
  return (
    <section className="flex flex-1 flex-col pl-[5px] text-[#3b3a38]">
      <div className="flex h-[50px] items-center pl-[5px]">
        <span className="w-[189px] text-[18.8px] font-semibold text-[#252423]">Fields</span>
        <Double color="#3b3a38" cls="" />
      </div>
      <div className="mt-[7px] flex h-[33px] w-[215px] items-center rounded-[2px] border border-[#7a7876] bg-white text-[16.2px] text-[#55606c]">
        <Mag color="#33332f" cls="mr-[8px] ml-[9px] -mt-[2px]" />
        <span className="pt-px">Search</span>
      </div>
      <div className="mt-[11px] flex h-[30px] items-center text-[14px]">
        <svg className="ml-[4px] mr-[1px] h-[26px] w-[41px]" viewBox="1704 304 41 26" fill="none" stroke="#3b3a38" strokeWidth="1.300">
          <path d="M1704.500 313l6.500 6.500 6.500-6.500" stroke="#605e5c" />
          <path d="M1723 309h15.500v14H1723zM1723 313.500h15.500M1723 318h15.500M1728 309v14M1733.500 309v14" strokeWidth="1.600" />
          <circle cx="1738.500" cy="323" r="7.300" fill="#f2c811" stroke="none" />
          <path d="M1735.500 323l2 2 4-4" strokeWidth="1.700" />
        </svg>
        GamingTbl
      </div>
      {fields.map(([n, sum], i) => (
        <div key={n} className="flex h-[30px] items-center pl-[43px] text-[14px]">
          <svg className="h-[20px] w-[47px]" viewBox="0 0 47 20" fill="none" stroke="#3b3a38" strokeWidth="1.300">
            {i === 0 ? (
              <>
                <rect x="0" y="2.500" width="15" height="15" rx="2" fill="#f2c811" stroke="none" />
                <path d="M3 10l3 3 6-6" strokeWidth="1" />
              </>
            ) : (
              <rect x=".600" y="3" width="13.800" height="13.800" rx="1.500" stroke="#7a7876" strokeWidth="1.200" />
            )}
            {sum && <path d="M38.500 3.500V1.500H26l7 8.500-7 8.500h12.500v-2" />}
          </svg>
          {n}
        </div>
      ))}
    </section>
  );
}

/* ---------- bottom bars ---------- */
function PageTabs() {
  return (
    <div className="flex h-[44px] w-[1417px]">
      <svg className="h-[44px] w-[49px]" viewBox="51 946 49 44" fill="#bdbbb9">
        <path d="M63.500 961.500v11l-5.500-5.500zM86.500 961.500v11l5.500-5.500z" />
      </svg>
      <div className="w-[95px] border-b-[5px] border-l border-b-[#f2c811] border-l-[#8a8886] bg-white text-center text-[14.3px] leading-[43px] text-[#252423]">Page 1</div>
      <div className="mt-[2px] flex h-[40px] w-[50px] items-center justify-center bg-[#f2c811]">
        <svg className="h-[14px] w-[14px]" viewBox="0 0 14 14" stroke="#7a7876" strokeWidth="3.500">
          <path d="M7 0v14M0 7h14" />
        </svg>
      </div>
    </div>
  );
}

function StatusBar() {
  return (
    <div className="flex h-[29px] shrink-0 items-center border-t border-[#dddbd9] pl-[7px] pt-[1px] text-[14px] text-[#484644]">
      <span className="w-[1398px] tracking-[0.1px]">Page 1 of 1</span>
      <svg className="h-[20px] w-[165px]" viewBox="1405 996 165 20" fill="none" stroke="#3b3a38" strokeWidth="1.400">
        <path d="M1409 1006h6M1552.500 1006h9M1557 1001.500v9" />
        <path d="M1421 1006h125M1483 1003v6" stroke="#605e5c" />
        <path d="M1464.500 999v14" strokeWidth="4.500" />
      </svg>
      <span className="ml-[13px] w-[58px] -translate-y-px text-[14px] text-[#605e5c]">74%</span>
      <svg className="h-[16px] w-[20px]" viewBox="0 0 20 16" fill="none" stroke="#484644" strokeWidth="1.300">
        <path d="M.700.700h18.600v14.600H.7z" />
        <path d="M4 6V3.500h3M13 3.500h3V6M16 10v2.500h-3M7 12.500H4V10" stroke="#2a83c4" />
      </svg>
      <span className="ml-[13px] whitespace-nowrap text-[14.3px]">Update available (click to download)</span>
    </div>
  );
}

function Taskbar() {
  return (
    <footer className="flex h-[61px] shrink-0 justify-between bg-[linear-gradient(90deg,#1b2733_0px,#20232e_90px,#122a38_160px,#22232c_230px,#20222b_300px,#2c1e20_335px,#22222a_400px,#232127_580px,#231a20_720px,#12161a_900px,#221216_1000px,#3a1017_1080px,#4e0f14_1180px,#2c1518_1290px,#1b2320_1370px,#541014_1450px,#3e1116_1580px,#2a151a_1700px,#1b1a20_1920px)]">
      <svg className="h-[61px] w-[580px]" viewBox="0 1019 580 61">
        <defs>
          <linearGradient id="win" x1="0" y1="0" x2="1" y2="1"><stop offset="0" stopColor="#7ff0fb" /><stop offset="1" stopColor="#1296f5" /></linearGradient>
          <linearGradient id="fold" x1="0" y1="0" x2="0" y2="1"><stop offset="0" stopColor="#ffdd6e" /><stop offset="1" stopColor="#f8bd2e" /></linearGradient>
          <linearGradient id="edge1" x1="0" y1="0" x2="1" y2="0.300"><stop offset="0" stopColor="#2aa5e0" /><stop offset="0.550" stopColor="#35c6c4" /><stop offset="1" stopColor="#6ade4a" /></linearGradient>
          <linearGradient id="edge2" x1="0" y1="0" x2="0" y2="1"><stop offset="0" stopColor="#1c87d4" /><stop offset="1" stopColor="#104a9c" /></linearGradient>
          <linearGradient id="fox" x1="0.800" y1="0" x2="0.300" y2="1"><stop offset="0" stopColor="#fff04a" /><stop offset="0.450" stopColor="#ff8a1f" /><stop offset="1" stopColor="#f01f6a" /></linearGradient>
          <linearGradient id="pbi1" x1="0" y1="0" x2="1" y2="1"><stop offset="0" stopColor="#e8ad0e" /><stop offset="1" stopColor="#c37a10" /></linearGradient>
          <linearGradient id="pbi2" x1="0" y1="0" x2="1" y2="1"><stop offset="0" stopColor="#f7df6e" /><stop offset="1" stopColor="#e6ad10" /></linearGradient>
        </defs>
        <path d="M27 1036h14v14H27zM42 1036h14v14H42zM27 1051h14v14H27zM42 1051h14v14H42z" fill="url(#win)" />
        <g fill="none" stroke="#e9e9ea" strokeLinecap="round">
          <circle cx="98.500" cy="1048" r="11" strokeWidth="2.600" fill="#3f434b" />
          <path d="M91 1056l-5.500 6.500" strokeWidth="3.400" />
        </g>
        <g fill="none" strokeWidth="5">
          <rect x="146.500" y="1037" width="18" height="18.500" rx="2" stroke="#0f96d4" />
          <path d="M144 1044.500h11.500c1.500 0 2 .500 2 2V1060c0 1.500-.500 2-2 2H142c-1.500 0-2-.500-2-2v-13.500c0-1.500.500-2 2-2z" stroke="#f28a0c" />
          <path d="M146.500 1042v11.500c0 1.500.500 2 2 2h4" stroke="#0f96d4" />
        </g>
        <g>
          <path d="M203 1035h8l1.500 4.500 3.500 1.800 4-1.300 3 5.500-3 3.200v3l3 3.300-3.500 5.500-4.500-1-3 2-1.500 4h-7l-1.500-4.500-3.500-1.800-4 1.300-3.500-6 3-3.200v-3l-3-3.300 4-5.500 4 1 3-2z" fill="#7d838c" />
          <circle cx="207" cy="1050" r="7" fill="#eceef0" />
          <circle cx="207" cy="1050" r="5" fill="#1263b5" />
        </g>
        <path d="M247 1037c0-1 .500-1.500 1.500-1.500h8l3 3.500H277v9h-30z" fill="#dd9a12" />
        <path d="M247 1042.500h11l3-3h14.500c1 0 1.500.500 1.500 1.500V1063h-30z" fill="url(#fold)" />
        <path d="M252.500 1063v-5.500c0-1.500 1-2.500 2.500-2.500h14.500c1.500 0 2.500 1 2.500 2.500v5.500z" fill="#1577c4" />
        <path d="M256 1059.500h12.500" stroke="#0c4f92" strokeWidth="1.500" />
        <circle cx="317" cy="1050" r="15" fill="url(#edge2)" />
        <path d="M302 1049c1-9 8-14 15-14 9 0 15 7 15 13 0 5-4 8-9 8-4 0-6-1-5-3 2-3 1-8-4-9-5 0-9 2-12 5z" fill="url(#edge1)" />
        <path d="M317.500 1047c-3 4 0 11 8 11 2 0 4-.500 5.500-1.500-3 5-8 8-13 8-6-3-9-13-.5-17.500z" fill="#123f86" />
        <circle cx="372" cy="1051" r="14" fill="url(#fox)" />
        <path d="M374 1034c5 3 12 10 12 17h-14c0-4-2-7 0-9 2-3 1-5 2-8zM359 1041l3 3 4-2 3 3z" fill="#ffc933" />
        <circle cx="371.500" cy="1050.500" r="6.500" fill="#8a3fe0" />
        <path d="M360 1045c4-2 8-1 10 2l-4 2c0 4 4 6 9 4-2 4-8 5-12 1-2-3-3-6-3-9z" fill="#ff9524" />
        <circle cx="426.500" cy="1050" r="13.500" fill="#17090c" stroke="#e4262e" strokeWidth="1.600" />
        <circle cx="426" cy="1051" r="6" fill="none" stroke="#ee2b33" strokeWidth="4" strokeDasharray="3 1.200" />
        <circle cx="426" cy="1051" r="4.800" fill="none" stroke="#ee2b33" strokeWidth="2.200" />
        <path d="M428.500 1051h-3M432.500 1054v-7M429 1047.500l3.500-4.500 3.500 4.500z" fill="#ee2b33" stroke="#ee2b33" strokeWidth="1.800" />
        <rect x="467" y="1036" width="29" height="28.500" rx="1.500" fill="#f8dc10" />
        <circle cx="481.500" cy="1046.500" r="7" fill="#fff" />
        <path d="M479.500 1043l5.500 3.500-5.500 3.500z" fill="#f2c811" />
        <text x="481.500" y="1061" fontSize="6.500" fontWeight="700" textAnchor="middle" fill="#33300f" fontFamily="Open Sans, sans-serif">Player</text>
        <rect x="512.500" y="1024.500" width="49" height="50" rx="5" fill="#2f2f37" stroke="#3b3b43" />
        <path d="M537.500 1036c0-.600.400-1 1-1h8.500c.600 0 1 .400 1 1v28c0 .600-.400 1-1 1h-9.500z" fill="url(#pbi1)" />
        <path d="M532 1043.500c0-.600.400-1 1-1h8c.600 0 1 .400 1 1V1065h-10z" fill="url(#pbi2)" />
        <path d="M526 1051c0-.600.400-1 1-1h8.500c.600 0 1 .400 1 1v14h-9.500c-.600 0-1-.400-1-1z" fill="#f5d86b" />
        <g strokeLinecap="round" strokeWidth="3.600">
          <path d="M205 1072h4M260 1072h4" stroke="#9a9ba0" />
          <path d="M469 1072h25" stroke="#35353a" />
          <path d="M469 1072h13.500" stroke="#fce100" />
          <path d="M529 1072h16" stroke="#dda6a4" />
        </g>
      </svg>
      <div className="flex items-center text-white">
        <svg className="h-[61px] w-[130px]" viewBox="1665 1019 130 61" fill="none" stroke="#fff" strokeWidth="1.500">
          <path d="M1672 1053l7-7 7 7" />
          <path d="M1705 1047c5-5 13-5 18 0M1707.800 1050.500c3.500-3.500 9-3.500 12.500 0M1710.800 1054c2-2 4.500-2 6.500 0" strokeWidth="2" />
          <circle cx="1714" cy="1057" r="1.700" fill="#fff" stroke="none" />
          <path d="M1734 1047.500h3.500l5-4.500v14l-5-4.500h-3.500zM1745.500 1047c1.500 2 1.500 4 0 6M1748.500 1044.500c3 3.500 3 7.500 0 11M1751 1042c4 5 4 11 0 16" />
          <path d="M1769 1045.500h12.500v10H1769zM1783.500 1048.500v4" />
          <path d="M1771.500 1048h8v5h-8z" fill="#fff" />
          <path d="M1765.500 1042v3.500M1769 1042v3.500M1764 1045.500h6.500v3c0 2-6.500 2-6.500 0zM1767.200 1050v6.500" fill="#fff" />
        </svg>
        <div className="w-[72px] text-right text-[14.3px] leading-[20px] whitespace-nowrap">
          <div>12:36 AM</div>
          <div>7/9/2022</div>
        </div>
        <span className="mr-[24px] ml-[9px] flex h-[20px] w-[20px] items-center justify-center rounded-full bg-[#dda6a4] text-[12px] text-[#2b1a1a]">1</span>
      </div>
    </footer>
  );
}

export default function App() {
  return (
    <div className="flex h-[1080px] w-[1920px] flex-col overflow-hidden bg-[#f3f2f0] font-['Open_Sans','Noto_Sans',sans-serif]">
      <TitleBar />
      <Tabs />
      <Ribbon />
      <div className="flex h-[790px] shrink-0">
        <Rail />
        <div className="flex w-[1417px] shrink-0 flex-col">
          <div className="flex">
            <Report />
            <Filters />
          </div>
          <PageTabs />
        </div>
        <div className="flex flex-1 shadow-[inset_0_4px_4px_-2px_#c8c6c4]">
          <Visualizations />
          <Fields />
        </div>
      </div>
      <StatusBar />
      <Taskbar />
    </div>
  );
}
